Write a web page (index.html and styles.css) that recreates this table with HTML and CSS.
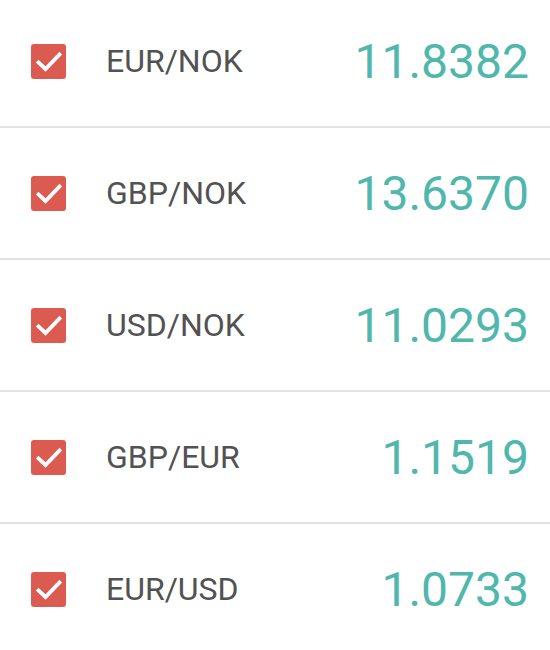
FILE: index.html
```html
<!DOCTYPE html>
<html>
<head>
<meta charset="utf-8">
<link rel="stylesheet" href="styles.css">
</head>
<body>
<ul class="rates">
  <li class="rate">
    <span class="check"><svg viewBox="0 0 34 34" width="34" height="34"><polyline points="6.5,18.5 13.5,25 27.5,10.5" /></svg></span>
    <span class="pair">EUR/NOK</span>
    <span class="value">11.8382</span>
  </li>
  <li class="rate">
    <span class="check"><svg viewBox="0 0 34 34" width="34" height="34"><polyline points="6.5,18.5 13.5,25 27.5,10.5" /></svg></span>
    <span class="pair">GBP/NOK</span>
    <span class="value">13.6370</span>
  </li>
  <li class="rate">
    <span class="check"><svg viewBox="0 0 34 34" width="34" height="34"><polyline points="6.5,18.5 13.5,25 27.5,10.5" /></svg></span>
    <span class="pair">USD/NOK</span>
    <span class="value">11.0293</span>
  </li>
  <li class="rate">
    <span class="check"><svg viewBox="0 0 34 34" width="34" height="34"><polyline points="6.5,18.5 13.5,25 27.5,10.5" /></svg></span>
    <span class="pair">GBP/EUR</span>
    <span class="value">1.1519</span>
  </li>
  <li class="rate">
    <span class="check"><svg viewBox="0 0 34 34" width="34" height="34"><polyline points="6.5,18.5 13.5,25 27.5,10.5" /></svg></span>
    <span class="pair">EUR/USD</span>
    <span class="value">1.0733</span>
  </li>
</ul>
</body>
</html>
```

FILE: styles.css
```css
html, body {
  margin: 0;
  padding: 0;
  background: #ffffff;
  overflow: hidden;
}

body {
  font-family: Roboto, "Liberation Sans", sans-serif;
}

.rates {
  list-style: none;
  margin: -4px 0 0 0;
  padding: 0;
}

.rate {
  display: flex;
  align-items: center;
  height: 130px;
  padding: 0 21px 0 31px;
  border-bottom: 2px solid #e2e2e2;
}

.check {
  display: flex;
  width: 35px;
  height: 35px;
  border-radius: 3px;
  background: #dc5b50;
  align-items: center;
  justify-content: center;
  flex: none;
}

.check svg polyline {
  fill: none;
  stroke: #ffffff;
  stroke-width: 3.8;
  stroke-linecap: square;
  stroke-linejoin: miter;
}

.pair {
  margin-left: 40px;
  font-size: 32px;
  color: #525252;
  flex: 1;
}

.value {
  font-size: 48px;
  color: #4fb7ab;
}
```
